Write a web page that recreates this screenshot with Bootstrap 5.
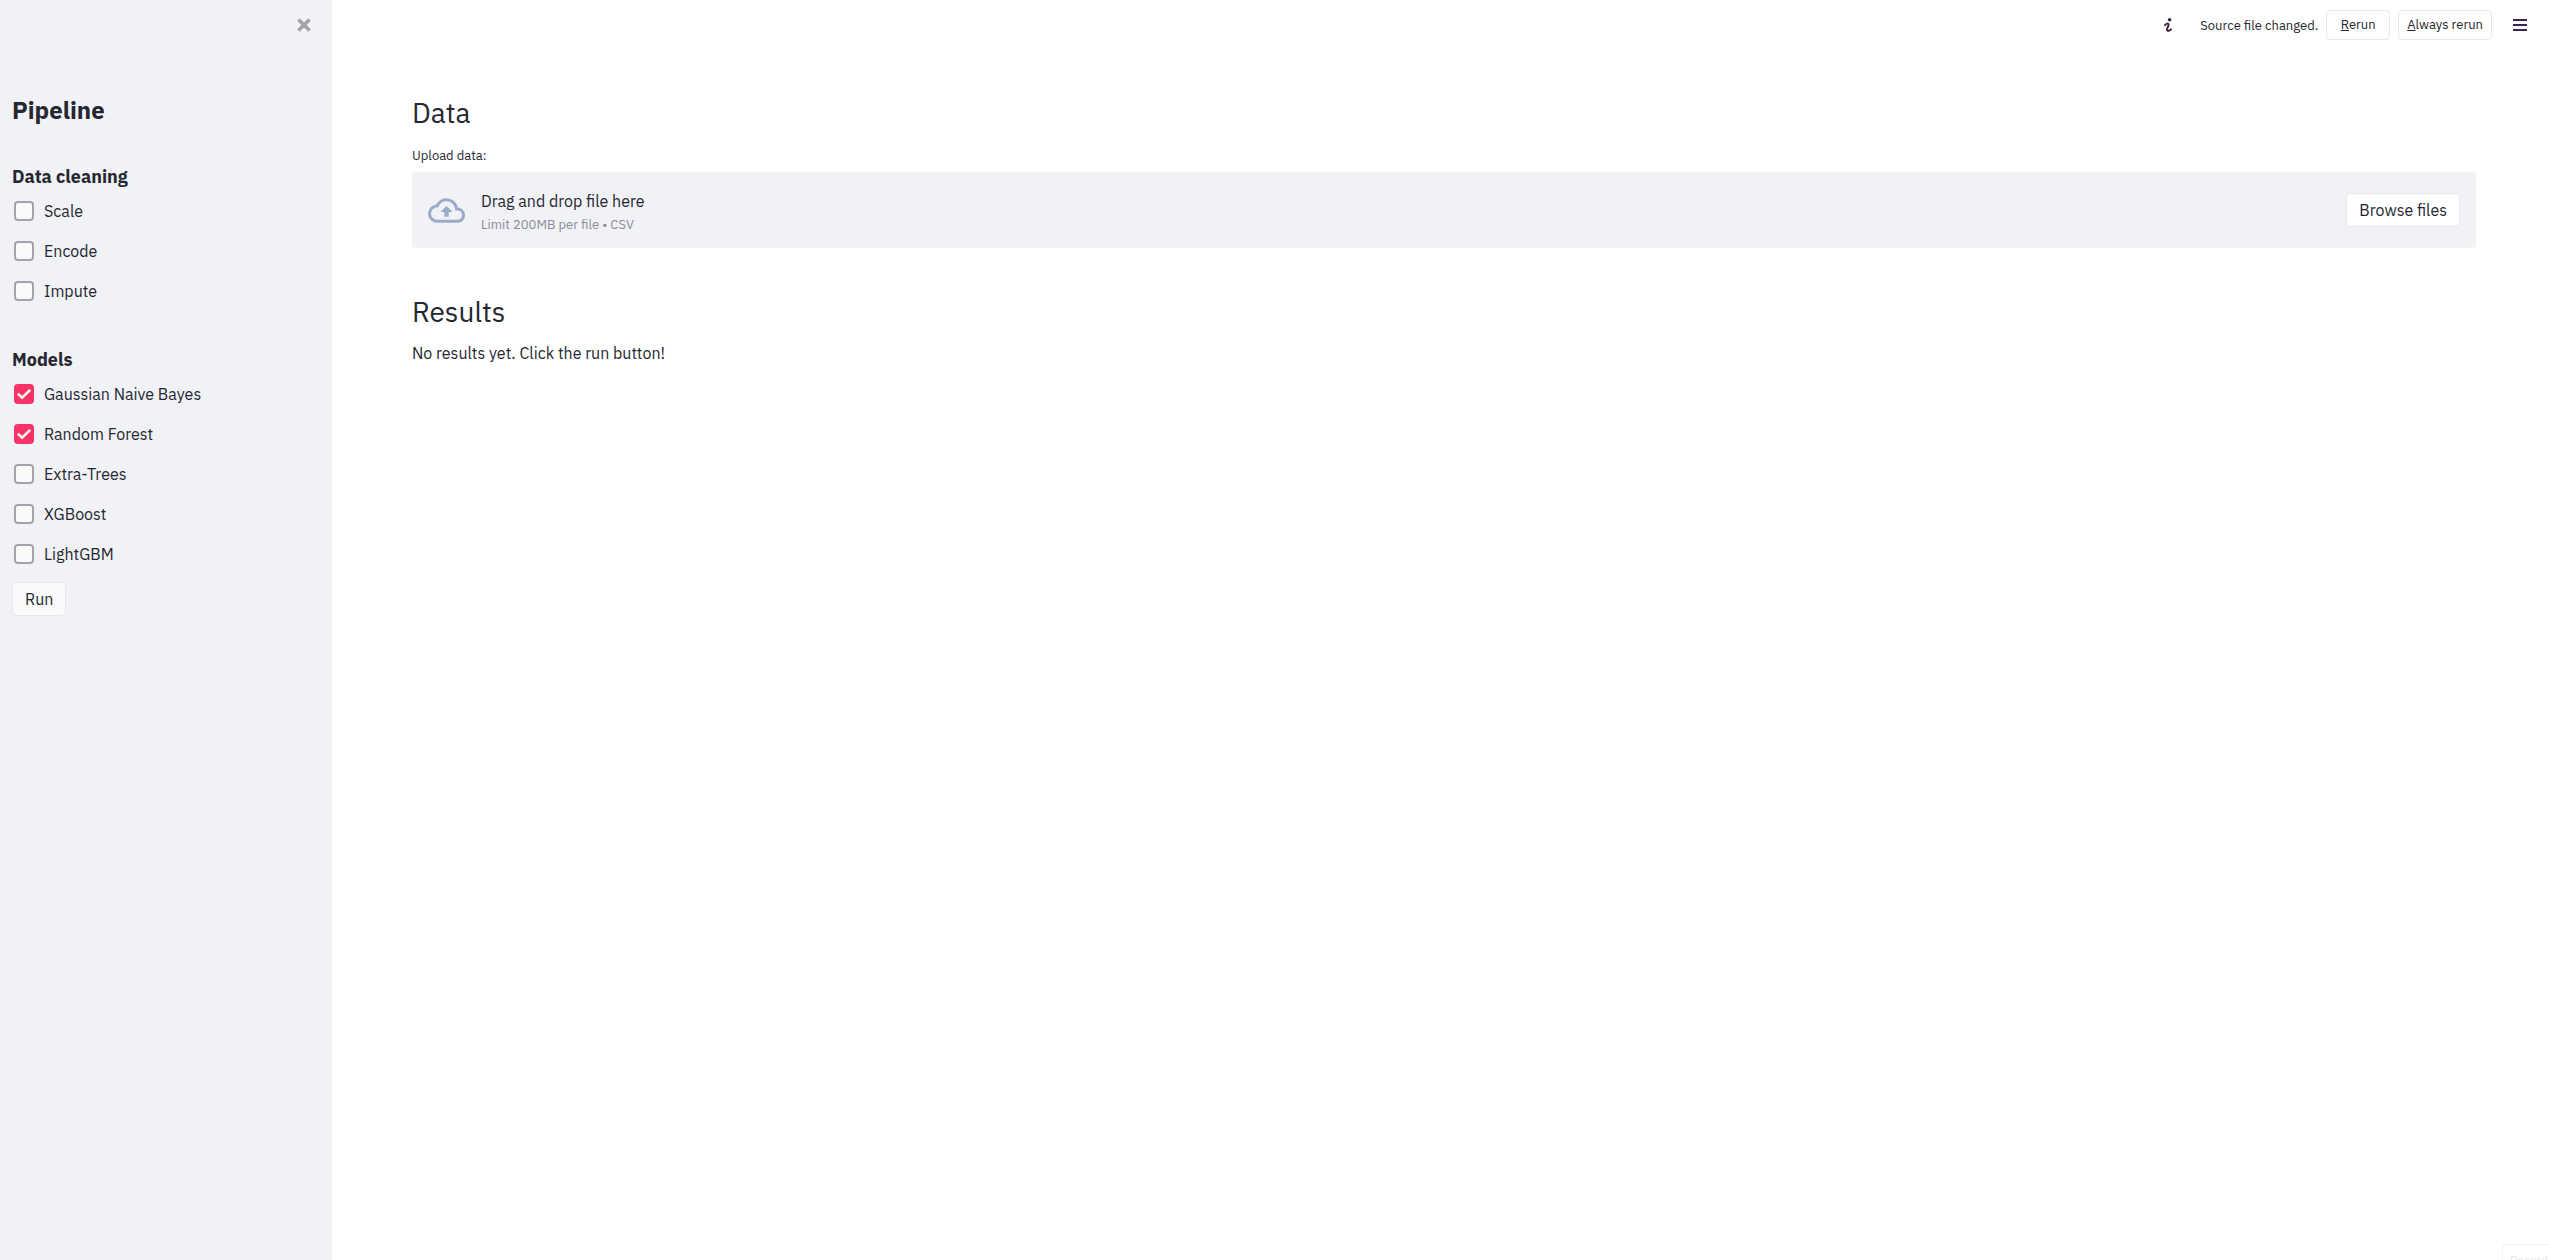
<!DOCTYPE html>
<html lang="en">
<head>
<meta charset="utf-8">
<meta name="viewport" content="width=device-width, initial-scale=1">
<title>Pipeline</title>
<link href="https://cdn.jsdelivr.net/npm/bootstrap@5.3.0/dist/css/bootstrap.min.css" rel="stylesheet">
<style>
  body { font-family: "IBM Plex Sans", Roboto, sans-serif; font-size: 16px; line-height: 24px; color: #262730; background: #fff; }
  h1, h2, h3 { color: #262730; margin: 0; }
  h1 { font-size: 24px; line-height: 32px; font-weight: 700; margin-bottom: 39px; }
  h3 { font-size: 18px; line-height: 24px; font-weight: 700; margin-bottom: 10px; }
  h2 { font-size: 28px; line-height: 36px; font-weight: 400; }
  .side-panel { width: 332px; background: #f0f2f6; }
  .side-top { height: 50px; padding-right: 20px; }
  .side-body { padding: 44px 12px 16px; }
  .icon-btn { padding: 0; border: 0; line-height: 0; }
  .option-group + .option-group { margin-top: 45px; }
  .option-list { display: flex; flex-direction: column; gap: 16px; }
  .option-list .form-check { display: flex; gap: 10px; min-height: 24px; margin: 0; padding: 0 0 0 2px; }
  .option-list .form-check-input { float: none; flex: none; width: 20px; height: 20px; margin: 2px 0 0; border: 2px solid #a3a4ab; border-radius: 4px; background-color: #fafafa; }
  .option-list .form-check-input:checked {
    background-color: #f63366; border-color: #f63366; background-origin: border-box;
    background-image: url("data:image/svg+xml,%3csvg xmlns='http://www.w3.org/2000/svg' viewBox='0 0 20 20'%3e%3cpath fill='none' stroke='%23f7f8f3' stroke-width='2.6' d='M3.8 9.6l4.3 4.2 8.1-7.9'/%3e%3c/svg%3e");
  }
  .app-btn { --bs-btn-color: #262730; --bs-btn-border-color: #e6e7ea; --bs-btn-bg: #fff; --bs-btn-border-radius: 4px; --bs-btn-padding-x: 12px; --bs-btn-padding-y: 4px; --bs-btn-font-size: 16px; --bs-btn-line-height: 24px; }
  .run-btn { --bs-btn-bg: #fafafa; margin-top: 16px; }
  .top-bar { height: 50px; padding: 0 22px; gap: 8px; font-size: 13px; }
  .top-bar .status-text { padding-top: 2px; }
  .top-bar .app-btn { --bs-btn-font-size: 13px; --bs-btn-line-height: 20px; --bs-btn-padding-x: 8px; min-width: 64px; }
  .top-bar .status-icon { margin-right: 20px; }
  .top-bar .menu-btn { margin-left: 13px; }
  .main-body { padding: 45px 73px 16px 80px; }
  .field-label { display: block; font-size: 13px; line-height: 20px; margin: 15px 0 6px; }
  .drop-zone { height: 76px; padding: 0 16px; gap: 16px; background: #f0f2f6; border-radius: 4px; }
  .drop-text { padding-top: 6px; }
  .drop-note { font-size: 13px; line-height: 24px; color: #8b8d96; }
  .results { margin-top: 46px; }
  .results p { margin: 11px 0 0; }
  .record-tip { right: -7px; bottom: -16px; padding: 5px 7px; border: 1px solid #f3f3f4; font-size: 12px; line-height: 20px; color: #e4e4e6; background: #fff; }
</style>
</head>
<body>
<div class="d-flex min-vh-100 overflow-hidden">
  <aside class="side-panel flex-shrink-0">
    <div class="side-top d-flex align-items-center justify-content-end">
      <button type="button" class="btn icon-btn" aria-label="Close sidebar">
        <svg width="16" height="16" viewBox="0 0 16 16"><path d="M3.2 3.2l9.6 9.6M12.8 3.2l-9.6 9.6" stroke="#a3a4a9" stroke-width="4" stroke-linecap="square" fill="none" transform="translate(.8 .8) scale(.9)"/></svg>
      </button>
    </div>
    <div class="side-body">
      <h1>Pipeline</h1>
      <section class="option-group">
        <h3>Data cleaning</h3>
        <div class="option-list">
          <div class="form-check"><input class="form-check-input" type="checkbox" id="scale"><label for="scale">Scale</label></div>
          <div class="form-check"><input class="form-check-input" type="checkbox" id="encode"><label for="encode">Encode</label></div>
          <div class="form-check"><input class="form-check-input" type="checkbox" id="impute"><label for="impute">Impute</label></div>
        </div>
      </section>
      <section class="option-group">
        <h3>Models</h3>
        <div class="option-list">
          <div class="form-check"><input class="form-check-input" type="checkbox" id="gnb" checked><label for="gnb">Gaussian Naive Bayes</label></div>
          <div class="form-check"><input class="form-check-input" type="checkbox" id="forest" checked><label for="forest">Random Forest</label></div>
          <div class="form-check"><input class="form-check-input" type="checkbox" id="extra"><label for="extra">Extra-Trees</label></div>
          <div class="form-check"><input class="form-check-input" type="checkbox" id="xgb"><label for="xgb">XGBoost</label></div>
          <div class="form-check"><input class="form-check-input" type="checkbox" id="lgbm"><label for="lgbm">LightGBM</label></div>
        </div>
      </section>
      <button type="button" class="btn app-btn run-btn">Run</button>
    </div>
  </aside>

  <div class="flex-grow-1">
    <header class="top-bar d-flex align-items-center justify-content-end">
      <svg class="status-icon" width="8" height="14" viewBox="0 0 8 14" aria-hidden="true"><circle cx="5.6" cy="1.8" r="1.8" fill="#31213f"/><path d="M1 7.2C2 5.6 4.6 4.8 4.6 6.8C4.6 8.4 2.8 10.4 2.9 11.8C3 13.2 5.6 13 7 11.4" stroke="#31213f" stroke-width="1.9" fill="none" stroke-linecap="round"/></svg>
      <span class="status-text">Source file changed.</span>
      <button type="button" class="btn app-btn"><u>R</u>erun</button>
      <button type="button" class="btn app-btn"><u>A</u>lways rerun</button>
      <button type="button" class="btn icon-btn menu-btn" aria-label="Menu">
        <svg width="14" height="14" viewBox="0 0 14 14"><path d="M0 2h14M0 7h14M0 12h14" stroke="#3a2350" stroke-width="2"/></svg>
      </button>
    </header>
    <main class="main-body">
      <h2>Data</h2>
      <label class="field-label" for="browse">Upload data:</label>
      <div class="drop-zone d-flex align-items-center">
        <svg class="flex-shrink-0" width="37" height="37" viewBox="0 0 24 24" fill="#9dabcb" aria-hidden="true"><path d="M19.35 10.04A7.49 7.49 0 0 0 12 4C9.11 4 6.6 5.64 5.35 8.04A5.994 5.994 0 0 0 0 14c0 3.31 2.69 6 6 6h13c2.76 0 5-2.24 5-5 0-2.64-2.05-4.78-4.65-4.96zM19 18H6c-2.21 0-4-1.79-4-4 0-2.05 1.53-3.76 3.56-3.97l1.07-.11.5-.95A5.469 5.469 0 0 1 12 6c2.62 0 4.88 1.86 5.39 4.43l.3 1.5 1.53.11A2.98 2.98 0 0 1 22 15c0 1.65-1.35 3-3 3zM8 13h2.55v3h2.9v-3H16l-4-4z"/></svg>
        <div class="drop-text flex-grow-1">
          <div>Drag and drop file here</div>
          <div class="drop-note">Limit 200MB per file • CSV</div>
        </div>
        <button type="button" class="btn app-btn" id="browse">Browse files</button>
      </div>
      <section class="results">
        <h2>Results</h2>
        <p>No results yet. Click the run button!</p>
      </section>
    </main>
  </div>
</div>
<div class="record-tip position-fixed">Record</div>
<script src="https://cdn.jsdelivr.net/npm/bootstrap@5.3.0/dist/js/bootstrap.bundle.min.js"></script>
</body>
</html>
